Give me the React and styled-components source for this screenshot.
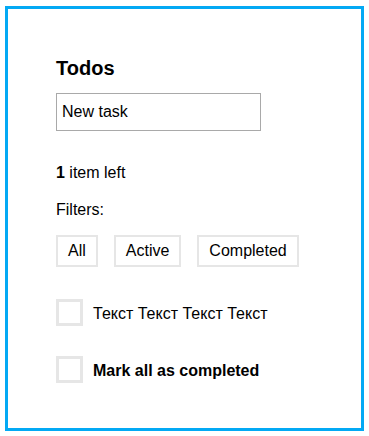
import React from "react";
import styled, { createGlobalStyle } from "styled-components";

const Global = createGlobalStyle`
  html, body { margin: 0; padding: 0; background: #fff; }
  body { font-family: "Liberation Sans", Arial, sans-serif; color: #000; }
`;

const Card = styled.section`
  box-sizing: border-box;
  margin: 6px 5px 5px;
  height: 425px;
  border: 3px solid #03a9f4;
  padding: 47px 0 0 48px;
  display: flex;
  flex-direction: column;
  align-items: flex-start;
`;

const Title = styled.h1`
  margin: 0;
  font-size: 20px;
  line-height: 24px;
  font-weight: bold;
`;

const TaskInput = styled.input`
  box-sizing: border-box;
  margin-top: 13px;
  width: 205px;
  height: 38px;
  border: 1px solid #a9a9a9;
  padding: 0 5px;
  font: 16px "Liberation Sans", Arial, sans-serif;
  color: #000;
  outline: none;
`;

const Line = styled.p`
  margin: ${(p) => p.$top}px 0 0;
  font-size: 16px;
  line-height: 18px;
`;

const Filters = styled.div`
  display: flex;
  gap: 16px;
  margin-top: 16px;
`;

const FilterButton = styled.button`
  box-sizing: border-box;
  height: 32px;
  padding: 0 10px;
  background: #fff;
  border: 2px solid #e6e6e6;
  font: 16px/18px "Liberation Sans", Arial, sans-serif;
  color: #000;
  cursor: pointer;
`;

const Row = styled.label`
  display: flex;
  align-items: center;
  gap: 10px;
  margin-top: ${(p) => p.$top}px;
  font-size: 16px;
  line-height: 18px;
  font-weight: ${(p) => (p.$bold ? "bold" : "normal")};
`;

const Box = styled.span`
  box-sizing: border-box;
  width: 27px;
  height: 27px;
  border: 3px solid #e6e6e6;
  background: #fff;
  flex: none;
`;

const RowText = styled.span`
  padding-top: 3px;
`;

export default function App() {
  return (
    <>
      <Global />
      <Card>
        <Title>Todos</Title>
        <TaskInput defaultValue="New task" />
        <Line $top={33}>
          <b>1</b> item left
        </Line>
        <Line $top={19}>Filters:</Line>
        <Filters>
          <FilterButton>All</FilterButton>
          <FilterButton>Active</FilterButton>
          <FilterButton>Completed</FilterButton>
        </Filters>
        <Row $top={32}>
          <Box />
          <RowText>Текст Текст Текст Текст</RowText>
        </Row>
        <Row $top={30} $bold>
          <Box />
          <RowText>Mark all as completed</RowText>
        </Row>
      </Card>
    </>
  );
}
